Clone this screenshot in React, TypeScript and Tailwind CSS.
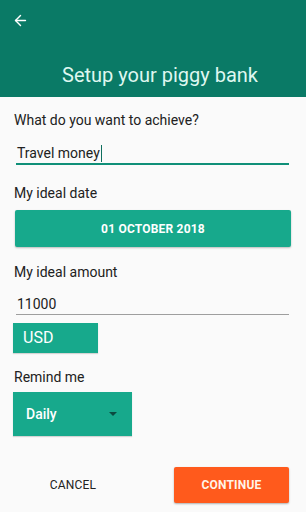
import { ArrowLeft } from 'lucide-react';

export default function App() {
    return (
        <div className="w-[306px] h-[512px] bg-[#fafafa] overflow-hidden font-['Roboto',sans-serif] text-[#212121]">
            <div className="h-[97px] bg-[#0a7a66] flex flex-col">
                <div className="pl-[12px] pt-[12px] h-[18px]">
                    <ArrowLeft size={17} strokeWidth={2} className="text-white" />
                </div>
                <h1 className="mt-[45px] text-center pl-[14px] text-[20px] leading-[24px] text-[#dff7f0]">Setup your piggy bank</h1>
            </div>

            <div className="px-[14px]">
                <p className="mt-[13px] text-[14px] leading-[20px]">What do you want to achieve?</p>
                <div className="mt-[13px] ml-[2px] w-[273px] border-b-2 border-[#0f8f78] flex items-center h-[22px] pl-[1px]">
                    <span className="text-[14px] leading-[20px]">Travel money</span>
                    <span className="w-[1.5px] h-[17px] bg-[#0f6f5e] ml-[1px]" />
                </div>

                <p className="mt-[18px] text-[14px] leading-[20px]">My ideal date</p>
                <button className="mt-[7px] ml-[1px] w-[276px] h-[37px] rounded-[2px] bg-[#17a98c] shadow-[0_1px_2px_rgba(0,0,0,0.25)] text-white text-[12px] font-bold tracking-[0.2px] flex items-center justify-center">
                    01 OCTOBER 2018
                </button>

                <p className="mt-[15px] text-[14px] leading-[20px]">My ideal amount</p>
                <div className="mt-[12px] ml-[2px] w-[273px] border-b border-[#9e9e9e] h-[21px] pl-[1px] flex items-center">
                    <span className="text-[14px] leading-[20px]">11000</span>
                </div>

                <div className="mt-[8px] -ml-[1px] w-[85px] h-[30px] bg-[#17a98c] flex items-center pl-[10px] shadow-[0_1px_1px_rgba(0,0,0,0.15)]">
                    <span className="text-white text-[16px]">USD</span>
                </div>

                <p className="mt-[14px] text-[14px] leading-[20px]">Remind me</p>
                <div className="mt-[5px] -ml-[1px] w-[119px] h-[44px] bg-[#17a98c] flex items-center justify-between pl-[13px] pr-[15px] shadow-[0_1px_1px_rgba(0,0,0,0.15)]">
                    <span className="text-white text-[14px] font-medium">Daily</span>
                    <span className="w-0 h-0 border-l-[4px] border-r-[4px] border-t-[4px] border-l-transparent border-r-transparent border-t-[#0b4a40]" />
                </div>
            </div>

            <div className="mt-[31px] flex items-center">
                <button className="w-[146px] h-[36px] text-[12px] text-[#222] tracking-[0.2px]">CANCEL</button>
                <button className="ml-[28px] w-[115px] h-[36px] rounded-[2px] bg-[#ff5a1c] shadow-[0_1px_2px_rgba(0,0,0,0.3)] text-[#fff3e8] text-[12px] font-bold tracking-[0.2px]">
                    CONTINUE
                </button>
            </div>
        </div>
    );
}
